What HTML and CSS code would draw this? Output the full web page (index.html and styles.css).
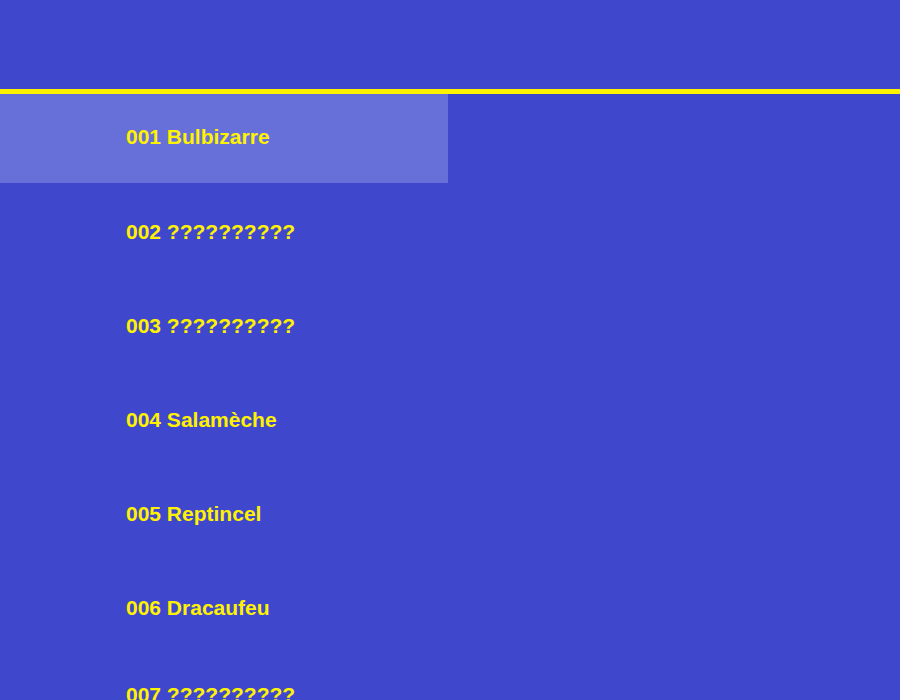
FILE: index.html
```html
<!DOCTYPE html>
<html lang="fr">
<head>
<meta charset="utf-8">
<title>Pokédex</title>
<link rel="stylesheet" href="styles.css">
</head>
<body>
<header class="top"></header>
<ul class="list">
  <li class="item active">001 Bulbizarre</li>
  <li class="item">002 ??????????</li>
  <li class="item">003 ??????????</li>
  <li class="item">004 Salamèche</li>
  <li class="item">005 Reptincel</li>
  <li class="item">006 Dracaufeu</li>
  <li class="item last">007 ??????????</li>
</ul>
</body>
</html>
```
FILE: styles.css
```css
html, body {
  margin: 0;
  padding: 0;
  background: #3f48cc;
  height: 100%;
  overflow: hidden;
}
.top {
  height: 89px;
  border-bottom: 5px solid #fff200;
}
.list {
  list-style: none;
  margin: 0;
  padding: 0;
}
.item {
  width: 448px;
  height: 94px;
  display: flex;
  align-items: center;
  padding-left: 126px;
  padding-top: 4px;
  box-sizing: border-box;
  font-family: "Liberation Sans", Arial, sans-serif;
  font-weight: bold;
  font-size: 21px;
  color: #fff200;
}
.item.active {
  height: 89px;
  padding-top: 0;
  padding-bottom: 4px;
  background: #6770d8;
}
.item.last {
  height: 80px;
}
```
